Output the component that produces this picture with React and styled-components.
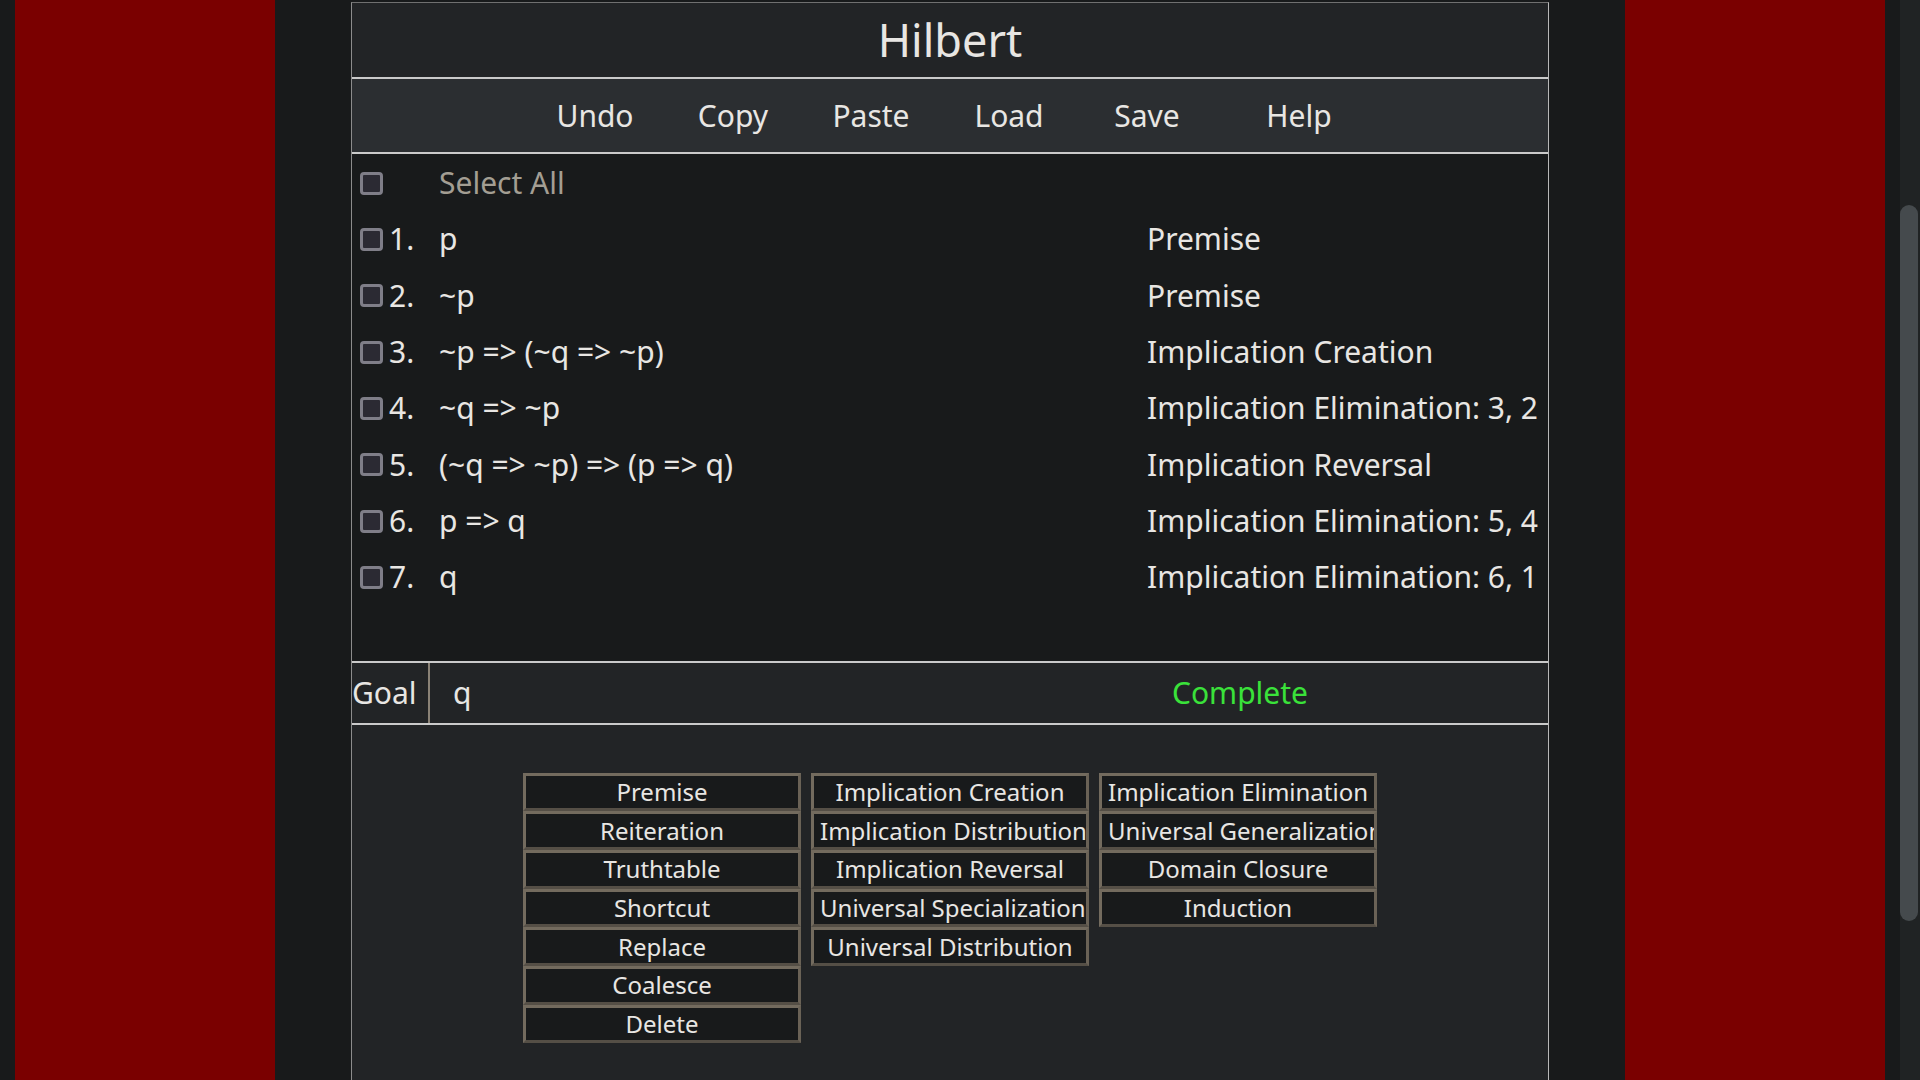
import React from "react";
import styled, { createGlobalStyle } from "styled-components";

const GlobalStyle = createGlobalStyle`
  html, body { margin: 0; padding: 0; background: #181a1b; }
  body {
    font-family: "Noto Sans", "Open Sans", sans-serif;
    color: #e8e6e3;
    color-scheme: dark;
  }
`;

const Viewport = styled.div`
  display: flex;
  min-height: 100vh;
`;

const Page = styled.div`
  flex: 0 0 1900px;
  display: flex;
  justify-content: space-between;
  box-sizing: border-box;
  padding: 0 15px;
`;

const ScrollRail = styled.div`
  flex: 0 0 20px;
  background: #202324;
`;

const ScrollThumb = styled.div`
  width: 18px;
  height: 716px;
  margin-top: 205px;
  border-radius: 9px;
  background: #454a4d;
`;

const Stripe = styled.div`
  flex: 0 0 260px;
  background: #7a0000;
`;

const Center = styled.main`
  flex: 1;
  display: flex;
  justify-content: center;
  align-items: flex-start;
`;

const Panel = styled.section`
  width: 1198px;
  box-sizing: border-box;
  margin-top: 2px;
  border: 1px solid #b8b8b8;
  border-top-color: #707070;
  border-left-color: #8c8c8c;
`;

const Header = styled.h1`
  margin: 0;
  height: 74px;
  line-height: 74px;
  text-align: center;
  font-size: 45px;
  font-weight: 400;
  background: #222426;
  border-bottom: 2px solid #cacaca;
`;

const Toolbar = styled.nav`
  display: flex;
  justify-content: center;
  height: 73px;
  padding-right: 6px;
  background: #2b2e31;
  border-bottom: 2px solid #cacaca;
`;

const ToolItem = styled.span`
  width: 138px;
  margin-left: ${(p) => (p.$sep ? "14px" : "0")};
  text-align: center;
  line-height: 73px;
  font-size: 30px;
  cursor: pointer;
`;

const List = styled.div`
  background: #181a1b;
  padding: 1px 0 55px;
  border-bottom: 2px solid #cacaca;
`;

const Row = styled.div`
  display: flex;
  align-items: center;
  height: 56.33px;
  padding: 8px 0 8px 8px;
  box-sizing: border-box;
  font-size: 30px;
  line-height: 40px;
`;

const Check = styled.input.attrs({ type: "checkbox" })`
  appearance: none;
  -webkit-appearance: none;
  flex: 0 0 auto;
  width: 23px;
  height: 23px;
  margin: 0;
  box-sizing: border-box;
  border: 3px solid #7f7e88;
  border-radius: 4px;
  background: #2b2a33;
`;

const Num = styled.span`
  flex: 0 0 56px;
  box-sizing: border-box;
  padding-left: 6px;
`;

const Formula = styled.span`
  flex: 0 0 708px;
  color: ${(p) => (p.$muted ? "#a39e93" : "#e8e6e3")};
  white-space: nowrap;
`;

const Rule = styled.span`
  flex: 1;
  white-space: nowrap;
`;

const GoalRow = styled.div`
  display: flex;
  height: 60px;
  line-height: 60px;
  font-size: 30px;
  background: #222426;
  border-bottom: 2px solid #cacaca;
`;

const GoalLabel = styled.span`
  flex: 0 0 76px;
  border-right: 2px solid #8a8276;
  white-space: nowrap;
  overflow: hidden;
`;

const GoalFormula = styled.span`
  flex: 0 0 502px;
  box-sizing: border-box;
  padding-left: 23px;
`;

const GoalStatus = styled.span`
  flex: 1;
  text-align: center;
  color: #3ae23a;
`;

const Actions = styled.div`
  display: flex;
  justify-content: center;
  align-items: flex-start;
  gap: 10px;
  padding: 48px 0 60px;
  background: #222426;
`;

const ActionColumn = styled.div`
  display: flex;
  flex-direction: column;
  width: 278px;
`;

const ActionButton = styled.button`
  display: block;
  width: 100%;
  height: 38.66px;
  margin: 0;
  padding: 0 6px;
  box-sizing: border-box;
  background: #181a1b;
  color: #e8e6e3;
  border: 3px solid;
  border-color: #736b5e #6a6256 #554f46 #736b5e;
  font-family: "Noto Sans", "Open Sans", sans-serif;
  font-size: 24px;
  line-height: 32px;
  overflow: hidden;
  cursor: pointer;
`;

const ButtonText = styled.span`
  display: block;
  text-align: center;
  white-space: nowrap;
`;

const rows = [
  { n: 1, f: "p", j: "Premise" },
  { n: 2, f: "~p", j: "Premise" },
  { n: 3, f: "~p => (~q => ~p)", j: "Implication Creation" },
  { n: 4, f: "~q => ~p", j: "Implication Elimination: 3, 2" },
  { n: 5, f: "(~q => ~p) => (p => q)", j: "Implication Reversal" },
  { n: 6, f: "p => q", j: "Implication Elimination: 5, 4" },
  { n: 7, f: "q", j: "Implication Elimination: 6, 1" },
];

const columns = [
  ["Premise", "Reiteration", "Truthtable", "Shortcut", "Replace", "Coalesce", "Delete"],
  [
    "Implication Creation",
    "Implication Distribution",
    "Implication Reversal",
    "Universal Specialization",
    "Universal Distribution",
  ],
  ["Implication Elimination", "Universal Generalization", "Domain Closure", "Induction"],
];

const tools = ["Undo", "Copy", "Paste", "Load", "Save"];

export default function App() {
  return (
    <>
      <GlobalStyle />
      <Viewport>
        <Page>
          <Stripe />
          <Center>
            <Panel>
              <Header>Hilbert</Header>
              <Toolbar>
                {tools.map((t) => (
                  <ToolItem key={t}>{t}</ToolItem>
                ))}
                <ToolItem $sep>Help</ToolItem>
              </Toolbar>
              <List>
                <Row>
                  <Check />
                  <Num />
                  <Formula $muted>Select All</Formula>
                </Row>
                {rows.map((r) => (
                  <Row key={r.n}>
                    <Check />
                    <Num>{r.n}.</Num>
                    <Formula>{r.f}</Formula>
                    <Rule>{r.j}</Rule>
                  </Row>
                ))}
              </List>
              <GoalRow>
                <GoalLabel>Goal</GoalLabel>
                <GoalFormula>q</GoalFormula>
                <GoalStatus>Complete</GoalStatus>
              </GoalRow>
              <Actions>
                {columns.map((col, i) => (
                  <ActionColumn key={i}>
                    {col.map((b) => (
                      <ActionButton key={b}>
                        <ButtonText>{b}</ButtonText>
                      </ActionButton>
                    ))}
                  </ActionColumn>
                ))}
              </Actions>
            </Panel>
          </Center>
          <Stripe />
        </Page>
        <ScrollRail>
          <ScrollThumb />
        </ScrollRail>
      </Viewport>
    </>
  );
}
